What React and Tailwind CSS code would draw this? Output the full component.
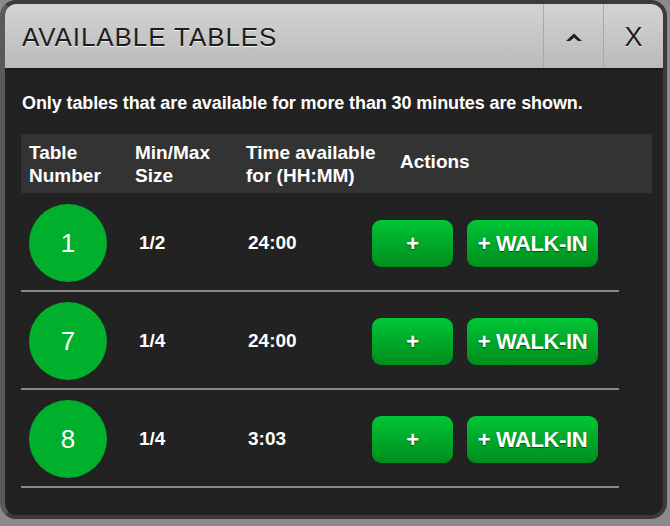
import React from 'react'

const rows = [
  { num: 1, size: '1/2', time: '24:00' },
  { num: 7, size: '1/4', time: '24:00' },
  { num: 8, size: '1/4', time: '3:03' },
]

const font = { fontFamily: '"Liberation Sans", Arial, sans-serif' }

function GreenButton({ children, width }) {
  return (
    <button
      type="button"
      className={`h-[47px] ${width} rounded-[9px] bg-gradient-to-b from-[#00c636] to-[#008d1d] text-white text-[22px] font-bold tracking-[-0.4px] [text-shadow:0_1px_1px_rgba(0,0,0,0.5)] flex items-center justify-center`}
    >
      {children}
    </button>
  )
}

export default function App() {
  return (
    <div className="w-[670px] h-[526px] bg-[#8c8a90] overflow-hidden" style={font}>
      <div className="w-[667px] h-[519px] rounded-[16px] border-[4px] border-[#3a3a3a] border-l-[5px] border-l-[#5a5a5a] bg-[#222222] overflow-hidden flex flex-col">
        {/* header */}
        <div className="h-[66px] shrink-0 flex bg-gradient-to-b from-[#d3d3d3] to-[#bbbbbb] border-b-[2px] border-[#1a1a1a]">
          <div className="flex-1 pl-[17px] pt-[3px] flex items-center text-[26px] text-[#1e1e1e] [text-shadow:0_1px_0_rgba(255,255,255,0.8)] tracking-[0.9px]">
            AVAILABLE TABLES
          </div>
          <div className="w-[60px] border-l border-[#a8a8a8] flex items-center justify-center pt-[2px]">
            <svg width="18" height="10" viewBox="0 0 18 10">
              <path d="M1 9 L9 1.5 L17 9 L13 9 L9 5.5 L5 9 Z" fill="#1e1e1e" />
            </svg>
          </div>
          <div className="w-[60px] border-l border-[#a8a8a8] flex items-center justify-center pt-[2px] text-[27px] text-[#1e1e1e] [text-shadow:0_1px_0_rgba(255,255,255,0.8)]">
            X
          </div>
        </div>

        {/* body */}
        <div className="pl-[16px] pr-[11px] pt-[22px]">
          <p className="text-white text-[18px] font-bold tracking-[-0.1px] leading-[22px] pl-[1px]">
            Only tables that are available for more than 30 minutes are shown.
          </p>

          <div className="mt-[20px] h-[59px] bg-[#333333] grid grid-cols-[114px_111px_154px_1fr] items-center text-white text-[19px] font-bold leading-[23px]">
            <div className="pl-[8px]">Table<br />Number</div>
            <div>Min/Max<br />Size</div>
            <div>Time available<br />for (HH:MM)</div>
            <div className="-mt-[4px]">Actions</div>
          </div>

          <div className="w-[598px] mt-[1px]">
            {rows.map((r) => (
              <div key={r.num} className="h-[98px] pt-[10px] border-b-[2px] border-[#8a8a8a]">
                <div className="h-[78px] flex items-center">
                  <div className="w-[118px] pl-[8px]">
                    <div className="w-[78px] h-[78px] rounded-full bg-[#00b02c] flex items-center justify-center text-white text-[26px]">
                      {r.num}
                    </div>
                  </div>
                  <div className="w-[109px] text-white text-[19px] font-bold">{r.size}</div>
                  <div className="w-[124px] text-white text-[19px] font-bold">{r.time}</div>
                  <div className="flex gap-[14px]">
                    <GreenButton width="w-[81px]">+</GreenButton>
                    <GreenButton width="w-[131px]">+ WALK-IN</GreenButton>
                  </div>
                </div>
              </div>
            ))}
          </div>
        </div>
      </div>
    </div>
  )
}
